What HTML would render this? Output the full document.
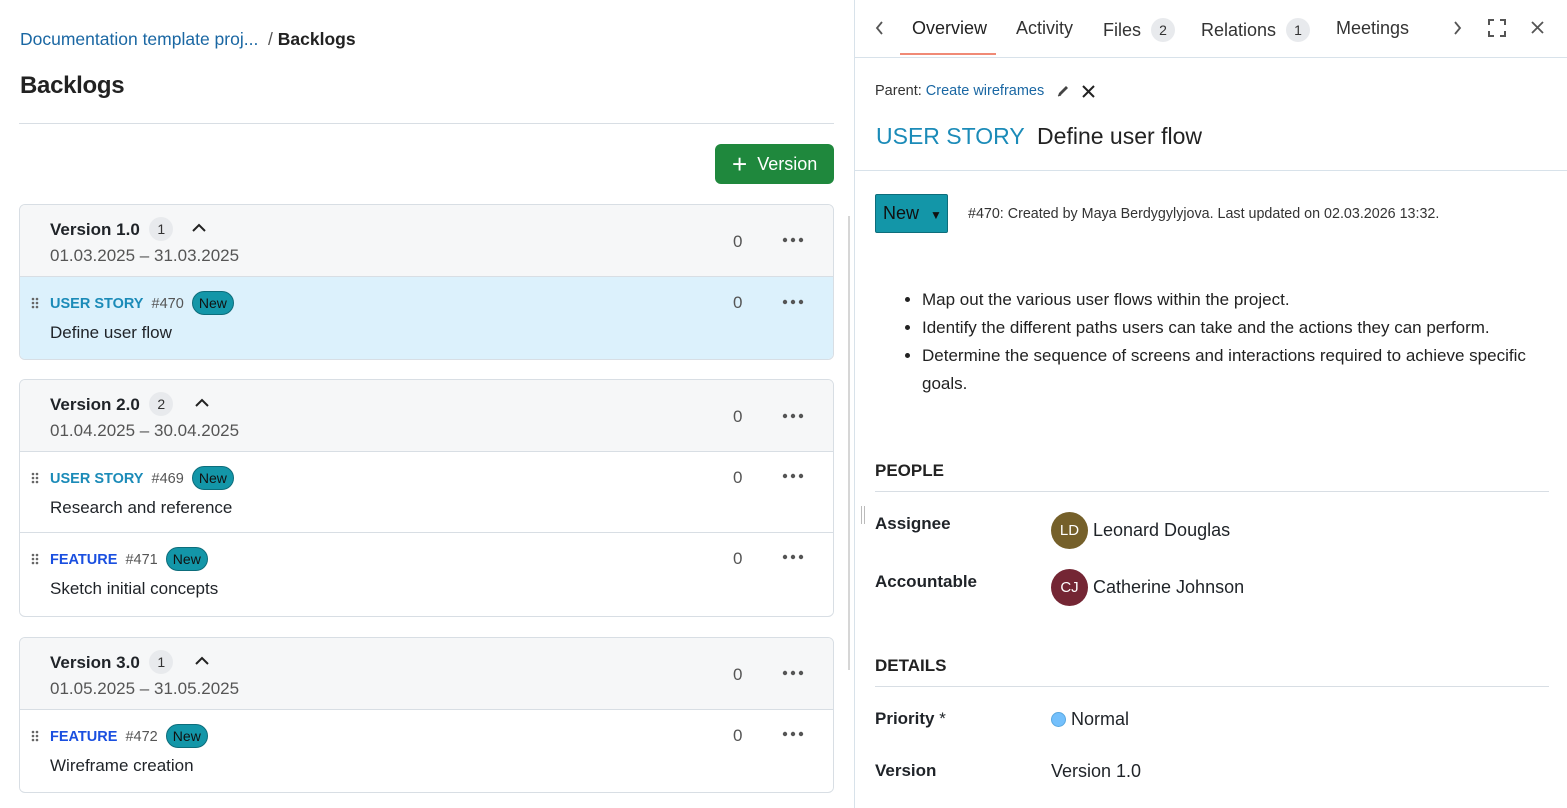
<!DOCTYPE html>
<html><head><meta charset="utf-8"><style>
*{box-sizing:border-box;margin:0;padding:0}
body{width:1567px;height:808px;overflow:hidden;background:#fff;font-family:"Liberation Sans",sans-serif;color:#1f2328;position:relative}
.a{position:absolute;white-space:nowrap}
.card{position:absolute;left:19px;width:815px;border:1px solid #d8dee4;border-radius:6px;overflow:hidden}
.vh{background:#f6f7f8;height:72px;border-bottom:1px solid #d8dee4;position:relative}
.row{height:81px;border-bottom:1px solid #d8dee4;position:relative;background:#fff}
.row:last-child{border-bottom:none}
.cnt{display:inline-block;background:#e8eaed;border-radius:12px;width:24px;height:24px;text-align:center;font-size:14px;line-height:24px;color:#333;font-weight:normal;vertical-align:1px}
.badge{display:inline-block;background:#1396a8;border:1px solid #0d6d7b;border-radius:13px;padding:0 6px;height:24px;line-height:22px;font-size:14px;color:#111}
.dots{position:absolute;left:762px}
.zero{position:absolute;left:713px;font-size:17px;color:#555}
.grip{position:absolute;left:11px}
.hd{left:30px;top:12px;font-size:17px;font-weight:bold}
.dt{left:30px;top:41px;font-size:17px;color:#555}
</style></head><body>
<div class="a" style="left:20px;top:29px;font-size:17.5px;color:#1a67a3">Documentation template proj... <span style="color:#555">&nbsp;/ </span><b style="color:#222">Backlogs</b></div>
<div class="a" style="left:20px;top:72px;font-size:24px;color:#222;font-weight:bold;letter-spacing:-0.3px">Backlogs</div>
<div class="a" style="left:19px;top:123px;width:815px;height:1px;background:#d8dee4"></div>
<div class="a" style="left:715px;top:144px;width:119px;height:40px;background:#1f883d;border-radius:6px;color:#fff;font-size:18px;line-height:40px;padding-left:17px"><span style="font-size:26px;vertical-align:-3px">+</span>&nbsp; Version</div>

<svg width="0" height="0" style="position:absolute"><defs>
<g id="dd"><circle cx="3" cy="3" r="2.2" fill="#555"/><circle cx="11" cy="3" r="2.2" fill="#555"/><circle cx="19" cy="3" r="2.2" fill="#555"/></g>
<g id="gr"><circle cx="2" cy="2" r="1.3" fill="#666"/><circle cx="6" cy="2" r="1.3" fill="#666"/><circle cx="2" cy="6" r="1.3" fill="#666"/><circle cx="6" cy="6" r="1.3" fill="#666"/><circle cx="2" cy="10" r="1.3" fill="#666"/><circle cx="6" cy="10" r="1.3" fill="#666"/></g>
<path id="up" d="M1 8l6-6 6 6" fill="none" stroke="#222" stroke-width="2"/>
</defs></svg>

<div class="card" style="top:204px;height:156px">
 <div class="vh"><div class="a hd">Version 1.0 &nbsp;<span class="cnt">1</span></div><svg class="a" style="left:172px;top:18px" width="14" height="10"><use href="#up"/></svg>
 <div class="a dt">01.03.2025 – 31.03.2025</div><div class="zero" style="top:27px">0</div><svg class="dots" style="top:32px" width="22" height="6"><use href="#dd"/></svg></div>
 <div class="row" style="background:#dcf1fc;height:82px"><svg class="grip" style="top:20px" width="8" height="12"><use href="#gr"/></svg><div class="a" style="left:30px;top:14px;font-size:14.5px"><b style="color:#1b8bb8">USER STORY</b> &nbsp;<span style="color:#555">#470</span> &nbsp;<span class="badge">New</span></div><div class="a" style="left:30px;top:46px;font-size:17px">Define user flow</div><div class="zero" style="top:16px">0</div><svg class="dots" style="top:22px" width="22" height="6"><use href="#dd"/></svg></div>
</div>

<div class="card" style="top:379px;height:238px">
 <div class="vh"><div class="a hd">Version 2.0 &nbsp;<span class="cnt">2</span></div><svg class="a" style="left:175px;top:18px" width="14" height="10"><use href="#up"/></svg>
 <div class="a dt">01.04.2025 – 30.04.2025</div><div class="zero" style="top:27px">0</div><svg class="dots" style="top:33px" width="22" height="6"><use href="#dd"/></svg></div>
 <div class="row"><svg class="grip" style="top:20px" width="8" height="12"><use href="#gr"/></svg><div class="a" style="left:30px;top:14px;font-size:14.5px"><b style="color:#1b8bb8">USER STORY</b> &nbsp;<span style="color:#555">#469</span> &nbsp;<span class="badge">New</span></div><div class="a" style="left:30px;top:46px;font-size:17px">Research and reference</div><div class="zero" style="top:16px">0</div><svg class="dots" style="top:21px" width="22" height="6"><use href="#dd"/></svg></div>
 <div class="row"><svg class="grip" style="top:20px" width="8" height="12"><use href="#gr"/></svg><div class="a" style="left:30px;top:14px;font-size:14.5px"><b style="color:#1a4fe0">FEATURE</b> &nbsp;<span style="color:#555">#471</span> &nbsp;<span class="badge">New</span></div><div class="a" style="left:30px;top:46px;font-size:17px">Sketch initial concepts</div><div class="zero" style="top:16px">0</div><svg class="dots" style="top:21px" width="22" height="6"><use href="#dd"/></svg></div>
</div>

<div class="card" style="top:637px;height:156px">
 <div class="vh"><div class="a hd">Version 3.0 &nbsp;<span class="cnt">1</span></div><svg class="a" style="left:175px;top:18px" width="14" height="10"><use href="#up"/></svg>
 <div class="a dt">01.05.2025 – 31.05.2025</div><div class="zero" style="top:27px">0</div><svg class="dots" style="top:32px" width="22" height="6"><use href="#dd"/></svg></div>
 <div class="row"><svg class="grip" style="top:20px" width="8" height="12"><use href="#gr"/></svg><div class="a" style="left:30px;top:14px;font-size:14.5px"><b style="color:#1a4fe0">FEATURE</b> &nbsp;<span style="color:#555">#472</span> &nbsp;<span class="badge">New</span></div><div class="a" style="left:30px;top:46px;font-size:17px">Wireframe creation</div><div class="zero" style="top:16px">0</div><svg class="dots" style="top:21px" width="22" height="6"><use href="#dd"/></svg></div>
</div>

<div class="a" style="left:848px;top:216px;width:2px;height:454px;background:#d6d6d6"></div>
<div class="a" style="left:854px;top:0;width:1px;height:808px;background:#d8e2ea"></div>
<div class="a" style="left:861px;top:506px;width:4px;height:18px;border-left:1px solid #bbb;border-right:1px solid #bbb"></div>

<!-- right panel -->
<svg class="a" style="left:875px;top:21px" width="9" height="14" viewBox="0 0 9 14"><path d="M7 1L2 7l5 6" fill="none" stroke="#555" stroke-width="1.8"/></svg>
<div class="a" style="left:912px;top:18px;font-size:18px;color:#222">Overview</div>
<div class="a" style="left:900px;top:53px;width:96px;height:2px;background:#f08a76"></div>
<div class="a" style="left:1016px;top:18px;font-size:18px;color:#333">Activity</div>
<div class="a" style="left:1103px;top:18px;font-size:18px;color:#333">Files &nbsp;<span class="cnt">2</span></div>
<div class="a" style="left:1201px;top:18px;font-size:18px;color:#333">Relations &nbsp;<span class="cnt">1</span></div>
<div class="a" style="left:1336px;top:18px;font-size:18px;color:#333">Meetings</div>
<svg class="a" style="left:1453px;top:21px" width="9" height="14" viewBox="0 0 9 14"><path d="M2 1l5 6-5 6" fill="none" stroke="#555" stroke-width="1.8"/></svg>
<svg class="a" style="left:1488px;top:19px" width="18" height="18" viewBox="0 0 18 18" fill="none" stroke="#555" stroke-width="2"><path d="M1 6V1h5M12 1h5v5M17 12v5h-5M6 17H1v-5"/></svg>
<svg class="a" style="left:1531px;top:21px" width="13" height="13" viewBox="0 0 13 13" stroke="#555" stroke-width="1.8"><path d="M1 1l11 11M12 1L1 12"/></svg>
<div class="a" style="left:855px;top:57px;width:712px;height:1px;background:#d8e2ea"></div>

<div class="a" style="left:875px;top:83px;font-size:14.5px;color:#333">Parent: <span style="color:#1a67a3">Create wireframes</span></div>
<svg class="a" style="left:1056px;top:84px" width="14" height="14" viewBox="0 0 14 14"><path d="M2 12l1-3 7-7 2 2-7 7z" fill="#444"/><path d="M2 12l3-1" stroke="#444"/></svg>
<svg class="a" style="left:1082px;top:85px" width="13" height="13" viewBox="0 0 13 13" stroke="#222" stroke-width="2"><path d="M1 1l11 11M12 1L1 12"/></svg>
<div class="a" style="left:876px;top:123px;font-size:23px;color:#1b8bb8">USER STORY <span style="color:#222">&nbsp;Define user flow</span></div>
<div class="a" style="left:855px;top:170px;width:712px;height:1px;background:#d8e2ea"></div>

<div class="a" style="left:875px;top:194px;width:73px;height:39px;background:#1396a8;border:1px solid #0d6d7b;border-radius:2px;font-size:18px;line-height:37px;padding-left:7px;color:#111">New <span style="font-size:12px;margin-left:6px">▼</span></div>
<div class="a" style="left:968px;top:206px;font-size:14.3px;color:#333">#470: Created by Maya Berdygylyjova. Last updated on 02.03.2026 13:32.</div>

<ul class="a" style="left:922px;top:286px;font-size:17px;line-height:28px;color:#222;white-space:normal;width:625px">
<li>Map out the various user flows within the project.</li>
<li>Identify the different paths users can take and the actions they can perform.</li>
<li>Determine the sequence of screens and interactions required to achieve specific goals.</li>
</ul>

<div class="a" style="left:875px;top:461px;font-size:17px;font-weight:bold;color:#222">PEOPLE</div>
<div class="a" style="left:875px;top:491px;width:674px;height:1px;background:#d8dee4"></div>
<div class="a" style="left:875px;top:514px;font-size:17px;font-weight:bold">Assignee</div>
<div class="a" style="left:1051px;top:512px;width:37px;height:37px;border-radius:50%;background:#75602a;color:#fff;font-size:15px;text-align:center;line-height:37px">LD</div>
<div class="a" style="left:1093px;top:520px;font-size:18px">Leonard Douglas</div>
<div class="a" style="left:875px;top:572px;font-size:17px;font-weight:bold">Accountable</div>
<div class="a" style="left:1051px;top:569px;width:37px;height:37px;border-radius:50%;background:#742634;color:#fff;font-size:15px;text-align:center;line-height:37px">CJ</div>
<div class="a" style="left:1093px;top:577px;font-size:18px">Catherine Johnson</div>

<div class="a" style="left:875px;top:656px;font-size:17px;font-weight:bold;color:#222">DETAILS</div>
<div class="a" style="left:875px;top:686px;width:674px;height:1px;background:#d8dee4"></div>
<div class="a" style="left:875px;top:709px;font-size:17px;font-weight:bold">Priority <span style="font-weight:normal">*</span></div>
<div class="a" style="left:1051px;top:712px;width:15px;height:15px;border-radius:50%;background:#74c0fc;border:1px solid #5aa8e0"></div>
<div class="a" style="left:1071px;top:709px;font-size:18px">Normal</div>
<div class="a" style="left:875px;top:761px;font-size:17px;font-weight:bold">Version</div>
<div class="a" style="left:1051px;top:761px;font-size:18px">Version 1.0</div>
</body></html>
